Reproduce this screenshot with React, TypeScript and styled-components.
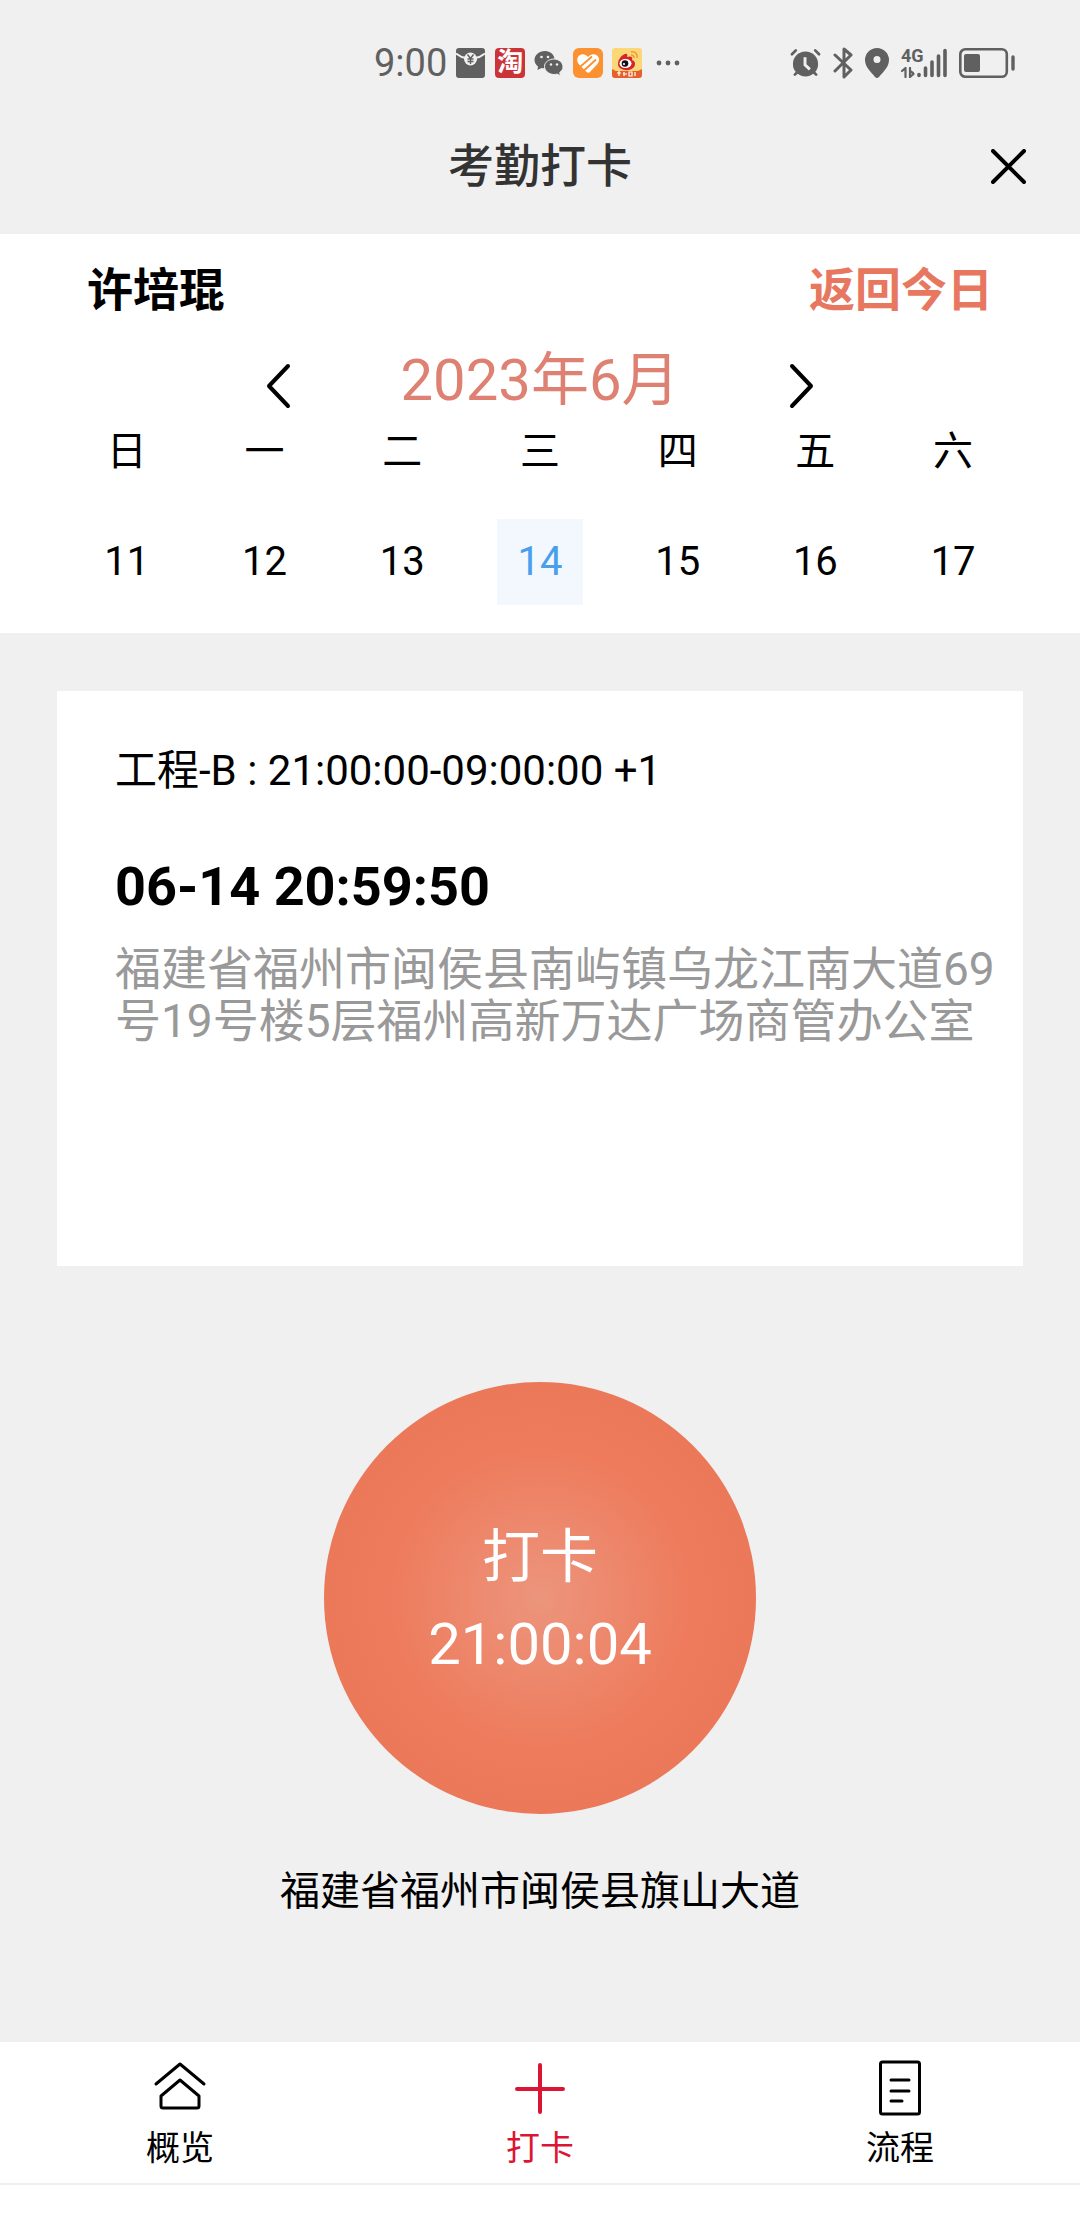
import React, { useState } from "react";
import styled, { createGlobalStyle } from "styled-components";

const Global = createGlobalStyle`
  * { box-sizing: border-box; }
  body { margin: 0; background: #f0f0f0; }
  button, a { font: inherit; color: inherit; text-decoration: none; }
  button { border: 0; padding: 0; background: none; cursor: pointer; }
  h1, h2, p { margin: 0; font-weight: 400; }
  svg { display: block; }
`;

const Page = styled.div`
  min-height: 100vh;
  display: flex;
  flex-direction: column;
  background: #f0f0f0;
  color: #000;
  font-family: Roboto, "Noto Sans CJK SC", sans-serif;
  font-size: 40px;
  line-height: 52px;
`;

const StatusBar = styled.div`
  display: flex;
  justify-content: space-between;
  align-items: center;
  height: 100px;
  padding: 26px 65px 0 374px;
  color: #606060;
`;

const IconRow = styled.div<{ $gap: number }>`
  display: flex;
  align-items: center;
  gap: ${(p) => p.$gap}px;
`;

const Clock = styled.span`
  font-size: 38px;
`;

const TaoBadge = styled.span`
  width: 30px;
  height: 30px;
  border-radius: 4px;
  background: #cc3338;
  color: #fff;
  font-size: 26px;
  font-weight: 700;
  line-height: 28px;
  text-align: center;
`;

const Signal = styled.div`
  display: flex;
  align-items: flex-end;
`;

const Network = styled.span`
  display: flex;
  flex-direction: column;
  justify-content: space-between;
  width: 16px;
  height: 30px;
  font-size: 18px;
  font-family: "Liberation Sans Narrow", Roboto, sans-serif;
  font-weight: 700;
  line-height: 16px;
  white-space: nowrap;
`;

const Header = styled.header`
  display: grid;
  grid-template-columns: 1fr auto 1fr;
  align-items: center;
  height: 134px;
  padding: 0 54px 2px;
`;

const Title = styled.h1`
  grid-column: 2;
  font-size: 46px;
  font-weight: 500;
  color: #333;
`;

const CloseButton = styled.button`
  justify-self: end;
`;

const Calendar = styled.section`
  padding: 30px 58px 28px;
  background: #fff;
`;

const UserRow = styled.div`
  display: flex;
  justify-content: space-between;
  padding: 0 29px;
  font-size: 46px;
  font-weight: 700;
`;

const TodayButton = styled.button`
  color: #e8775f;
`;

const MonthRow = styled.div`
  display: flex;
  justify-content: space-between;
  align-items: center;
  height: 110px;
  padding: 18px 207px 0;
`;

const WeekButton = styled.button`
  padding-top: 12px;
`;

const Month = styled.h2`
  font-size: 58px;
  line-height: 80px;
  color: #de8172;
`;

const Week = styled.table`
  width: 100%;
  table-layout: fixed;
  border-collapse: collapse;

  th, td {
    padding: 0;
    font-weight: 400;
    text-align: center;
  }
  th { padding-bottom: 41px; }
`;

const Day = styled.button<{ $active: boolean }>`
  width: 86px;
  height: 86px;
  background: ${(p) => (p.$active ? "#f2f8fe" : "none")};
  color: ${(p) => (p.$active ? "#4a9fec" : "#000")};
`;

const Card = styled.section`
  margin: 58px 57px 0;
  padding: 54px 20px 0 58px;
  min-height: 575px;
  background: #fff;
`;

const Shift = styled.p`
  font-size: 42px;
`;

const PunchTime = styled.p`
  margin: 64px 0 30px;
  font-size: 54px;
  font-weight: 700;
`;

const Address = styled.p`
  font-size: 46px;
  color: #999;
`;

const PunchArea = styled.section`
  flex: 1;
  display: flex;
  flex-direction: column;
  align-items: center;
  gap: 52px;
  padding-top: 116px;
`;

const PunchButton = styled.button`
  display: flex;
  flex-direction: column;
  align-items: center;
  justify-content: center;
  width: 432px;
  height: 432px;
  padding-top: 6px;
  border-radius: 50%;
  background: radial-gradient(circle closest-side, #ec957d, #ee7b5c 70%, #eb7859);
  color: #fff;
  font-size: 58px;
  line-height: 87px;
`;

const TabBar = styled.nav`
  display: grid;
  grid-template-columns: repeat(3, 1fr);
  height: 143px;
  border-bottom: 2px solid #f0f0f0;
  background: #fff;
`;

const Tab = styled.a<{ $active?: boolean }>`
  display: flex;
  flex-direction: column;
  align-items: center;
  gap: 6px;
  padding-top: 18px;
  font-size: 34px;
  color: ${(p) => (p.$active ? "#dc1535" : "#000")};
`;

const HomeInset = styled.div`
  height: 43px;
  background: #fff;
`;

const stroke = {
  fill: "none",
  stroke: "currentColor",
  strokeLinecap: "round" as const,
  strokeLinejoin: "round" as const,
};

const EnvelopeIcon = () => (
  <svg width="30" height="30" viewBox="0 0 30 30">
    <rect width="29" height="30" rx="3" fill="#606060" />
    <path d="M0 5.500q5 4 10 4.500M29 5.500q-5 4-10 4.500" stroke="#f0f0f0" strokeWidth="2" fill="none" />
    <circle cx="14.500" cy="11" r="6.500" fill="#f0f0f0" />
    <path d="M11.500 6.500l3 4 3-4M14.500 10v6M11.500 11h6M11.500 13.500h6" stroke="#606060" strokeWidth="1.400" fill="none" />
  </svg>
);

const WechatIcon = () => (
  <svg width="30" height="30" viewBox="0 0 30 30">
    <path d="M11 3C5 3 .5 7 .5 12c0 3 1.500 5 3.500 6.500L3.500 22l4-2c5 1 13-1 13-8.500C20.500 7 16.500 3 11 3z" fill="#606060" />
    <path d="M20 11c-5 0-9.500 3.200-9.500 7.500S15 26.500 20 26.500c1 0 2 0 3-.5l3.500 1.800-.8-3.300c2-1.500 3.300-3.300 3.300-5.500 0-4.300-4-8-9-8z" fill="#606060" stroke="#f0f0f0" />
    <g fill="#f0f0f0"><circle cx="7.500" cy="9" r="1.300" /><circle cx="14" cy="9" r="1.300" /><circle cx="17" cy="16.500" r="1.200" /><circle cx="23" cy="16.500" r="1.200" /></g>
  </svg>
);

const HeartIcon = () => (
  <svg width="30" height="30" viewBox="0 0 30 30">
    <rect width="30" height="30" rx="6" fill="#fb9130" />
    <path d="M15 9C12 5 7 5.500 5 9c-2 4 0 6 2 8.500L13.500 24q2 1.500 3.500 0l7-7.500c2-2.500 3-5 1-8-2.500-3-7-3-10 .5z" fill="#fff" />
    <path d="M7.500 18.500L19 8.500M11 22.500L23 11.500" stroke="#fb9130" strokeWidth="1.800" fill="none" />
  </svg>
);

const WeiboIcon = () => (
  <svg width="30" height="30" viewBox="0 0 30 30">
    <rect width="30" height="30" rx="3" fill="#fbd777" />
    <path d="M0 21l4 2 22 0 4-2v6a3 3 0 0 1-3 3H3a3 3 0 0 1-3-3z" fill="#e5602d" />
    <path d="M6 16c0-5 4-9 7-10 2-1 3 1 2 3 3-1 6-1 5 3 3 1 4 4 2 7-3 5-16 4-16-3z" fill="#d8232a" />
    <ellipse cx="13.500" cy="15.500" rx="6" ry="4.500" fill="#fff" />
    <circle cx="13" cy="15.500" r="3.300" fill="#111" /><circle cx="12" cy="16" r="1.100" fill="#fff" />
    <path d="M19 4c4-1 7 2 6 6M19 7c2 0 3 1 3 3" stroke="#f09a38" strokeWidth="1.500" fill="none" />
    <path d="M5 25h4M7 23v5M12 24v4M11 26h4M17 24v4h3v-4zM23 24v4" stroke="#fff" strokeWidth="1.200" fill="none" />
  </svg>
);

const MoreIcon = () => (
  <svg width="30" height="30" viewBox="0 0 30 30" fill="#606060">
    <circle cx="8" cy="15" r="2.400" /><circle cx="17" cy="15" r="2.400" /><circle cx="26" cy="15" r="2.400" />
  </svg>
);

const AlarmIcon = () => (
  <svg width="31" height="30" viewBox="0 0 32 30">
    <circle cx="16" cy="16" r="13" fill="#606060" />
    <path d="M2 6l4-4M30 6l-4-4M7 25l-2 2M25 25l2 2" {...stroke} strokeWidth="2.800" />
    <path d="M15.500 9v8l5 4.500" fill="none" stroke="#f0f0f0" strokeWidth="3" />
  </svg>
);

const BluetoothIcon = () => (
  <svg width="20" height="32" viewBox="0 0 20 32">
    <path d="M2 8l16 15-7 7V2l7 6L2 24" {...stroke} strokeWidth="3" />
  </svg>
);

const PinIcon = () => (
  <svg width="24" height="30" viewBox="0 0 24 30">
    <path fillRule="evenodd" d="M12 0a12 12 0 0 1 12 12c0 7-6 12-10 17q-2 2-4 0C6 24 0 19 0 12A12 12 0 0 1 12 0zm0 8a3.500 3.500 0 1 0 0 7 3.500 3.500 0 0 0 0-7z" fill="#606060" />
  </svg>
);

const TrafficIcon = () => (
  <svg width="14" height="11" viewBox="0 0 14 11">
    <path d="M1 4l3.500-3v9M9 1v9l3.500-3M9 4l3 2" {...stroke} strokeWidth="2.200" />
  </svg>
);

const BarsIcon = () => (
  <svg width="30" height="30" viewBox="0 0 30 30">
    <path d="M2 26.500v1M8.500 20v7.500M15 14v13.500M21.500 8v19.500M28 2.500v25" {...stroke} strokeWidth="3.600" />
  </svg>
);

const BatteryIcon = () => (
  <svg width="56" height="30" viewBox="0 0 56 30">
    <rect x="1.300" y="1.300" width="46.500" height="27.400" rx="5" fill="none" stroke="#606060" strokeWidth="2.600" />
    <rect x="5" y="6" width="16" height="18" rx="2" fill="#606060" />
    <path d="M54 9v12" {...stroke} strokeWidth="3.400" />
  </svg>
);

const CloseIcon = () => (
  <svg width="35" height="35" viewBox="0 0 35 35">
    <path d="M2 2l31 31M33 2L2 33" {...stroke} strokeWidth="4" />
  </svg>
);

const Chevron = ({ d }: { d: string }) => (
  <svg width="26" height="46" viewBox="0 0 26 46">
    <path d={d} {...stroke} strokeWidth="4" />
  </svg>
);

const HomeIcon = () => (
  <svg width="56" height="56" viewBox="0 0 56 56">
    <path d="M4 24L28 4l24 20M9 36l19-16 19 16v10q0 2-2 2H11q-2 0-2-2z" {...stroke} strokeWidth="3" />
  </svg>
);

const PlusIcon = () => (
  <svg width="56" height="56" viewBox="0 0 56 56">
    <path d="M28 5v47M5 29h46" {...stroke} strokeWidth="4" />
  </svg>
);

const DocIcon = () => (
  <svg width="56" height="56" viewBox="0 0 56 56">
    <rect x="8.500" y="2" width="39" height="52" rx="2" {...stroke} strokeWidth="3" />
    <path d="M19 20h18M19 31h18M19 41h11" {...stroke} strokeWidth="3" />
  </svg>
);

const weekdays = ["日", "一", "二", "三", "四", "五", "六"];
const days = [11, 12, 13, 14, 15, 16, 17];

export default function App() {
  const [selected, setSelected] = useState(14);
  return (
    <Page>
      <Global />
      <StatusBar>
        <IconRow $gap={9}>
          <Clock>9:00</Clock>
          <EnvelopeIcon />
          <TaoBadge>淘</TaoBadge>
          <WechatIcon />
          <HeartIcon />
          <WeiboIcon />
          <MoreIcon />
        </IconRow>
        <IconRow $gap={12}>
          <AlarmIcon />
          <BluetoothIcon />
          <PinIcon />
          <Signal>
            <Network>
              4G
              <TrafficIcon />
            </Network>
            <BarsIcon />
          </Signal>
          <BatteryIcon />
        </IconRow>
      </StatusBar>
      <Header>
        <Title>考勤打卡</Title>
        <CloseButton aria-label="关闭"><CloseIcon /></CloseButton>
      </Header>
      <Calendar>
        <UserRow>
          <span>许培琨</span>
          <TodayButton onClick={() => setSelected(14)}>返回今日</TodayButton>
        </UserRow>
        <MonthRow>
          <WeekButton aria-label="上一周"><Chevron d="M23 3L4 23l19 20" /></WeekButton>
          <Month>2023年6月</Month>
          <WeekButton aria-label="下一周"><Chevron d="M3 3l19 20L3 43" /></WeekButton>
        </MonthRow>
        <Week>
          <thead>
            <tr>{weekdays.map((w) => <th key={w} scope="col">{w}</th>)}</tr>
          </thead>
          <tbody>
            <tr>
              {days.map((d) => (
                <td key={d}>
                  <Day $active={d === selected} onClick={() => setSelected(d)}>{d}</Day>
                </td>
              ))}
            </tr>
          </tbody>
        </Week>
      </Calendar>
      <Card>
        <Shift>工程-B : 21:00:00-09:00:00 +1</Shift>
        <PunchTime>06-14 20:59:50</PunchTime>
        <Address>福建省福州市闽侯县南屿镇乌龙江南大道69号19号楼5层福州高新万达广场商管办公室</Address>
      </Card>
      <PunchArea>
        <PunchButton>
          <span>打卡</span>
          <span>21:00:04</span>
        </PunchButton>
        <p>福建省福州市闽侯县旗山大道</p>
      </PunchArea>
      <TabBar>
        <Tab href="#overview"><HomeIcon />概览</Tab>
        <Tab href="#punch" $active aria-current="page"><PlusIcon />打卡</Tab>
        <Tab href="#process"><DocIcon />流程</Tab>
      </TabBar>
      <HomeInset />
    </Page>
  );
}
